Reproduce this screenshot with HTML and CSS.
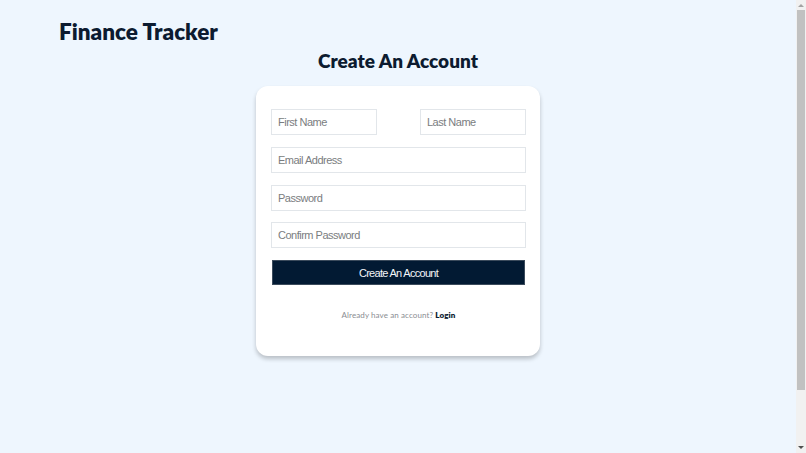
FILE: index.html
```html
<!DOCTYPE html>
<html lang="en">
<head>
<meta charset="utf-8">
<title>Finance Tracker</title>
<link rel="stylesheet" href="styles.css">
</head>
<body>
<div class="shell">
  <div class="content">
    <header class="topbar">
      <h1 class="brand">Finance Tracker</h1>
    </header>
    <main class="page">
      <h2 class="page-title">Create An Account</h2>
      <form class="card">
        <div class="row-two">
          <input class="field field-half" type="text" placeholder="First Name">
          <input class="field field-half" type="text" placeholder="Last Name">
        </div>
        <input class="field" type="email" placeholder="Email Address">
        <input class="field" type="password" placeholder="Password">
        <input class="field" type="password" placeholder="Confirm Password">
        <button class="submit" type="button">Create An Account</button>
        <p class="login-note">Already have an account? <a class="login-link" href="#">Login</a></p>
      </form>
    </main>
  </div>
  <div class="scrollbar" aria-hidden="true">
    <span class="arrow arrow-up"></span>
    <span class="thumb"></span>
    <span class="arrow arrow-down"></span>
  </div>
</div>
</body>
</html>
```

FILE: styles.css
```css
html, body {
  margin: 0;
  padding: 0;
  overflow: hidden;
}
body {
  background: #eef6fe;
  font-family: "Lato", "Liberation Sans", sans-serif;
  color: #0c1b30;
}
.shell {
  display: flex;
  height: 100vh;
}
.content {
  flex: 1;
  min-width: 0;
}
.scrollbar {
  width: 10px;
  background: #f1f1f1;
  display: flex;
  flex-direction: column;
  align-items: center;
}
.thumb {
  width: 8px;
  height: 380px;
  background: #c1c1c1;
  margin-top: 1px;
}
.arrow {
  width: 0;
  height: 0;
  border-left: 3px solid transparent;
  border-right: 3px solid transparent;
}
.arrow-up {
  margin-top: 4px;
  border-bottom: 3px solid #a3a3a3;
  margin-bottom: 2px;
}
.arrow-down {
  margin-top: auto;
  margin-bottom: 4px;
  border-top: 3px solid #505050;
}
.topbar {
  padding: 18px 0 0 59px;
}
.brand {
  margin: 0;
  font-family: "Lato", sans-serif;
  font-weight: 800;
  font-size: 22.5px;
  line-height: 28px;
  color: #0c1b30;
}
.page {
  display: flex;
  flex-direction: column;
  align-items: center;
}
.page-title {
  margin: 2px 0 0;
  font-family: "Lato", sans-serif;
  font-weight: 800;
  font-size: 19px;
  line-height: 26px;
  color: #0c1b30;
}
.card {
  margin-top: 12px;
  box-sizing: border-box;
  width: 284px;
  height: 270px;
  background: #ffffff;
  border-radius: 12px;
  box-shadow: 0 3px 4px rgba(0, 0, 0, 0.22);
  padding: 23px 14px 0 15px;
  display: flex;
  flex-direction: column;
}
.row-two {
  display: flex;
  justify-content: space-between;
}
.field {
  box-sizing: border-box;
  width: 255px;
  height: 26px;
  margin: 0 0 11.75px;
  padding: 0 6px;
  border: 1px solid #e2e6ea;
  border-radius: 0;
  background: #fff;
  font-family: "Liberation Sans", Arial, sans-serif;
  font-size: 11px;
  letter-spacing: -0.5px;
  color: #333;
  outline: none;
}
.field::placeholder {
  color: #7a7d80;
}
.row-two .field-half {
  width: 106px;
}
.submit {
  box-sizing: border-box;
  width: 253px;
  height: 25px;
  margin: 0 0 0 1px;
  border: 1px solid #3b4b5c;
  background: #021a33;
  color: #f3f5f8;
  font-family: "Liberation Sans", Arial, sans-serif;
  font-size: 11px;
  letter-spacing: -0.7px;
  cursor: pointer;
}
.login-note {
  margin: 25px 0 0;
  text-align: center;
  font-family: "Lato", sans-serif;
  font-size: 8px;
  color: #8a8d92;
  letter-spacing: 0.1px;
}
.login-link {
  color: #0c1b30;
  font-weight: 800;
  text-decoration: none;
}
```
